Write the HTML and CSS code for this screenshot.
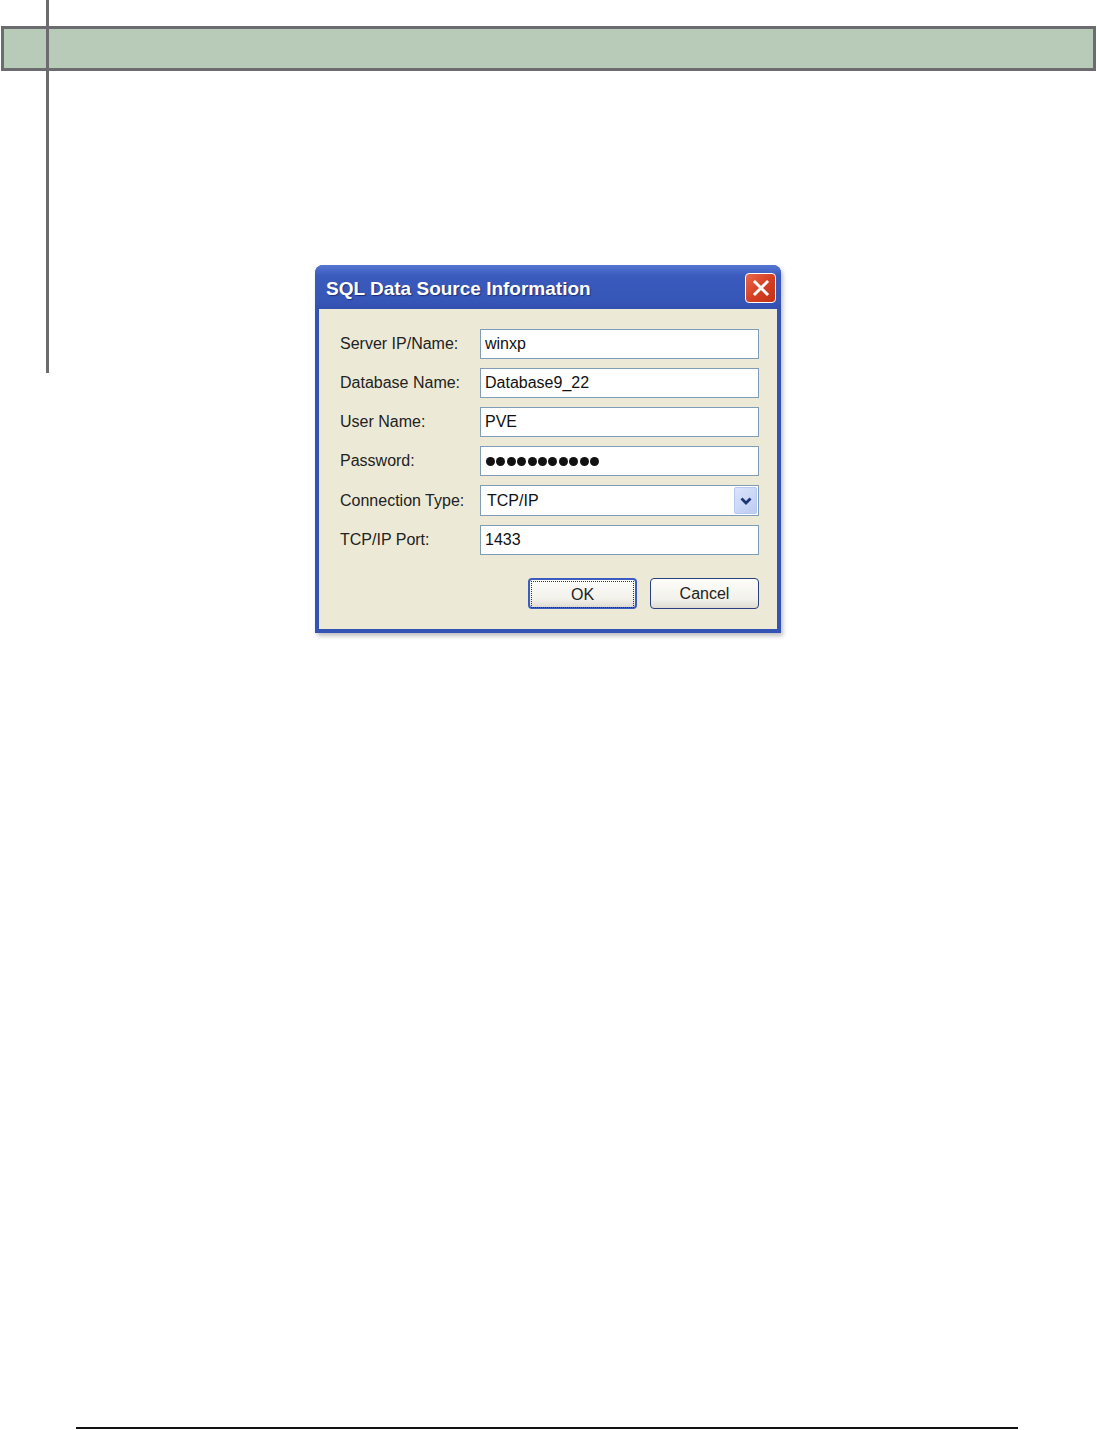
FILE: index.html
```html
<!DOCTYPE html>
<html lang="en">
<head>
    <meta charset="UTF-8">
    <meta name="viewport" content="width=device-width, initial-scale=1.0">
    <title>SQL Data Source Information</title>
    <link rel="stylesheet" href="styles.css">
</head>
<body>
    <div class="page">
        <div class="side-rule"></div>
        <div class="head-bar"></div>

        <!-- Dialog -->
        <div class="dialog">
            <div class="titlebar">
                <span class="title">SQL Data Source Information</span>
                <button class="close" type="button" aria-label="Close">
                    <svg width="18" height="18" viewBox="0 0 18 18">
                        <path d="M3 3 L15 15 M15 3 L3 15" stroke="#fff" stroke-width="3" stroke-linecap="square"/>
                    </svg>
                </button>
            </div>
            <div class="client">
                <div class="row">
                    <label>Server IP/Name:</label>
                    <div class="field">winxp</div>
                </div>
                <div class="row">
                    <label>Database Name:</label>
                    <div class="field">Database9_22</div>
                </div>
                <div class="row">
                    <label>User Name:</label>
                    <div class="field">PVE</div>
                </div>
                <div class="row">
                    <label>Password:</label>
                    <div class="field password">
                        <span class="dot"></span><span class="dot"></span><span class="dot"></span><span class="dot"></span><span class="dot"></span><span class="dot"></span><span class="dot"></span><span class="dot"></span><span class="dot"></span><span class="dot"></span><span class="dot"></span>
                    </div>
                </div>
                <div class="row">
                    <label>Connection Type:</label>
                    <div class="field combo">
                        <span>TCP/IP</span>
                        <span class="combo-btn">
                            <svg width="14" height="10" viewBox="0 0 14 10">
                                <path d="M2.5 2.5 L7 7 L11.5 2.5" stroke="#1c3577" stroke-width="2.8" fill="none"/>
                            </svg>
                        </span>
                    </div>
                </div>
                <div class="row">
                    <label>TCP/IP Port:</label>
                    <div class="field">1433</div>
                </div>
                <div class="buttons">
                    <button class="btn default" type="button"><span>OK</span></button>
                    <button class="btn" type="button"><span>Cancel</span></button>
                </div>
            </div>
        </div>

        <div class="bottom-rule"></div>
    </div>
</body>
</html>
```

FILE: styles.css
```css
body {
    margin: 0;
    padding: 0;
    background: #fff;
    font-family: "Liberation Sans", Arial, sans-serif;
    color: #222;
}

.page {
    position: relative;
    width: 1097px;
    height: 1430px;
    padding-top: 26px;
    box-sizing: border-box;
}

.side-rule {
    position: absolute;
    left: 46px;
    top: 0;
    width: 3px;
    height: 373px;
    background: #6b6b70;
}

.head-bar {
    margin-left: 1px;
    width: 1095px;
    height: 45px;
    box-sizing: border-box;
    border: 3px solid #6b6b70;
    background: #b8cbb8;
}

.dialog {
    width: 466px;
    margin: 194px 0 0 315px;
    background: #3553b4;
    border-radius: 8px 8px 0 0;
    padding: 0 4px 4px;
    box-sizing: border-box;
    box-shadow: 2px 3px 4px rgba(0, 0, 0, 0.25);
}

.titlebar {
    height: 44px;
    display: flex;
    align-items: center;
    justify-content: space-between;
    background: linear-gradient(#5576d2, #3a5bbd 25%, #3656b8 80%, #3350b0);
    margin: 0 -4px;
    padding-left: 11px;
    padding-right: 5px;
    border-radius: 8px 8px 0 0;
}

.title {
    color: #fff;
    font-weight: bold;
    font-size: 19px;
    text-shadow: 1px 1px 1px #1d2f78;
    padding-top: 4px;
}

.close {
    width: 31px;
    height: 30px;
    border: 1px solid #fff;
    border-radius: 4px;
    background: linear-gradient(135deg, #e8684a, #d43d22 55%, #c23218);
    display: flex;
    align-items: center;
    justify-content: center;
    padding: 0;
    margin-top: 2px;
}

.client {
    background: #ecead7;
    padding: 20px 17px 20px 21px;
}

.row {
    display: flex;
    align-items: center;
    margin-bottom: 9px;
}

.row label {
    width: 140px;
    font-size: 16px;
    color: #222;
}

.field {
    width: 279px;
    height: 30px;
    box-sizing: border-box;
    border: 1px solid #7f9db9;
    background: #fff;
    font-size: 16px;
    padding-left: 4px;
    display: flex;
    align-items: center;
    color: #111;
}

.password {
    gap: 1.4px;
    padding-left: 5px;
}

.dot {
    width: 9px;
    height: 9px;
    border-radius: 50%;
    background: #111;
}

.combo {
    height: 31px;
    justify-content: space-between;
    padding-right: 1px;
    padding-left: 6px;
}

.combo-btn {
    width: 23px;
    height: 27px;
    border-radius: 2px;
    background: linear-gradient(135deg, #dbe4fb, #bccbf2);
    border: 1px solid #b9c8ef;
    box-sizing: border-box;
    display: flex;
    align-items: center;
    justify-content: center;
}

.buttons {
    display: flex;
    justify-content: flex-end;
    gap: 13px;
    margin-top: 23px;
    padding-right: 1px;
}

.btn {
    width: 109px;
    height: 31px;
    border: 1px solid #2a3f80;
    border-radius: 4px;
    background: linear-gradient(#fdfdfb, #f2f1ea 70%, #dedcd2);
    font-family: "Liberation Sans", Arial, sans-serif;
    font-size: 16px;
    color: #222;
    padding: 2px;
}

.btn span {
    display: flex;
    align-items: center;
    justify-content: center;
    height: 100%;
}

.btn.default {
    border: 2px solid #3a5dbf;
    padding: 1px;
}

.btn.default span {
    border: 1px dotted #333;
}

.bottom-rule {
    position: absolute;
    left: 76px;
    top: 1427px;
    width: 942px;
    height: 2px;
    background: #111;
}
```
